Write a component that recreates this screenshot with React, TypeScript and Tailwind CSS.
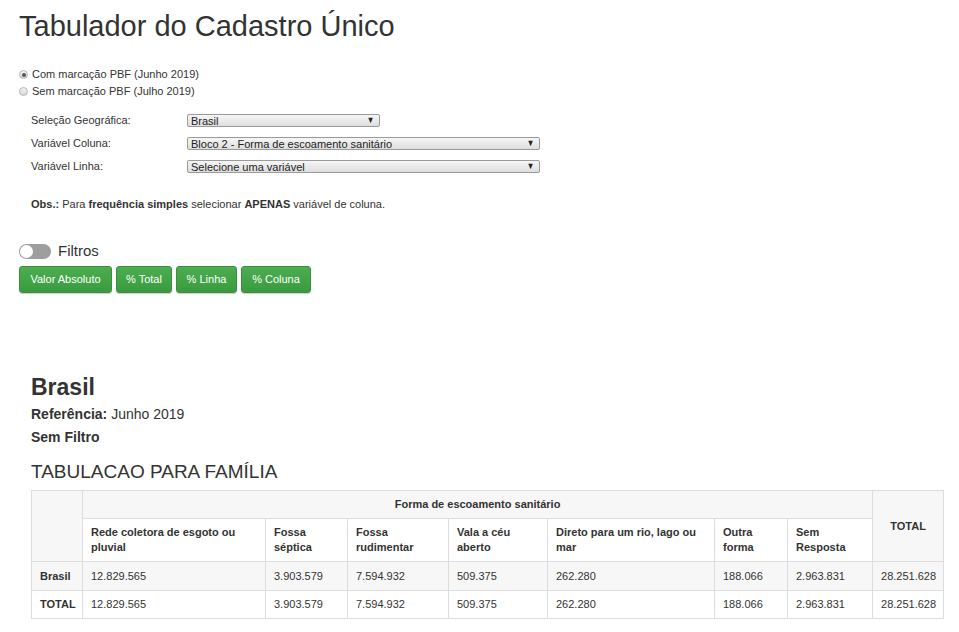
import React from "react";

const font = { fontFamily: '"Liberation Sans", Arial, Helvetica, sans-serif' };

function Select({ value, width }: { value: string; width: string }) {
  return (
    <div
      className={`${width} h-[13px] flex items-center justify-between border border-[#9a9a9a] rounded-[2px] bg-gradient-to-b from-[#f6f6f6] to-[#dedede] pl-[3px] pr-[4px] text-[11px] leading-none text-[#222]`}
    >
      <span className="mt-[1px]">{value}</span>
      <span className="text-[9px] leading-none text-[#222] scale-x-[0.85]">▼</span>
    </div>
  );
}

function Radio({ checked, label }: { checked: boolean; label: string }) {
  return (
    <div className="flex items-center h-[17px] text-[11px] text-[#333]">
      <span className="w-[9px] h-[9px] rounded-full border border-[#b5b5b5] bg-gradient-to-b from-[#f2f2f2] to-[#d8d8d8] flex items-center justify-center mr-[4px]">
        {checked && <span className="w-[4px] h-[4px] rounded-full bg-[#555]" />}
      </span>
      <span>{label}</span>
    </div>
  );
}

function Btn({ children, w }: { children: React.ReactNode; w: string }) {
  return (
    <div
      className={`${w} h-[27px] flex items-center justify-center rounded-[3px] border border-[#3b8f3e] bg-gradient-to-b from-[#4cae50] to-[#3b9a3f] text-white text-[11px] shadow-[0_1px_1px_rgba(0,0,0,0.2)]`}
    >
      {children}
    </div>
  );
}

const cols = ["Rede coletora de esgoto ou pluvial", "Fossa séptica", "Fossa rudimentar", "Vala a céu aberto", "Direto para um rio, lago ou mar", "Outra forma", "Sem Resposta"];
const colWidths = [51, 183, 82, 101, 99, 167, 73, 85, 71];
const vals = ["12.829.565", "3.903.579", "7.594.932", "509.375", "262.280", "188.066", "2.963.831"];

export default function App() {
  return (
    <div className="w-[959px] min-h-[632px] bg-white text-[#333]" style={font}>
      <div className="pl-[19px] pt-[8px]">
        <h1 className="text-[29px] leading-[36px] font-normal text-[#333]">Tabulador do Cadastro Único</h1>
        <div className="mt-[22px] flex flex-col">
          <Radio checked label="Com marcação PBF (Junho 2019)" />
          <Radio checked={false} label="Sem marcação PBF (Julho 2019)" />
        </div>
        <div className="pl-[12px] mt-[13px] flex flex-col gap-[10px] text-[11px]">
          <div className="flex items-center h-[13px] mt-[1px]">
            <span className="w-[156px]">Seleção Geográfica:</span>
            <Select value="Brasil" width="w-[193px]" />
          </div>
          <div className="flex items-center h-[13px]">
            <span className="w-[156px]">Variável Coluna:</span>
            <Select value="Bloco 2 - Forma de escoamento sanitário" width="w-[353px]" />
          </div>
          <div className="flex items-center h-[13px]">
            <span className="w-[156px]">Variável Linha:</span>
            <Select value="Selecione uma variável" width="w-[353px]" />
          </div>
          <div className="mt-[15px] h-[13px] flex items-center">
            <span>
              <b>Obs.:</b> Para <b>frequência simples</b> selecionar <b>APENAS</b> variável de coluna.
            </span>
          </div>
        </div>
        <div className="mt-[32px] flex items-center h-[17px]">
          <div className="w-[32px] h-[15px] rounded-full bg-[#9e9e9e] relative">
            <div className="absolute left-[1px] top-[1px] w-[13px] h-[13px] rounded-full bg-white" />
          </div>
          <span className="ml-[7px] text-[15px]">Filtros</span>
        </div>
        <div className="mt-[6px] flex gap-[4px]">
          <Btn w="w-[93px]">Valor Absoluto</Btn>
          <Btn w="w-[56px]">% Total</Btn>
          <Btn w="w-[61px]">% Linha</Btn>
          <Btn w="w-[70px]">% Coluna</Btn>
        </div>
      </div>

      <div className="pl-[31px] pr-[16px] mt-[79px]">
        <div className="text-[23px] font-bold leading-[30px] text-[#333]">Brasil</div>
        <div className="text-[14px] leading-[20px] mt-[2px]">
          <b>Referência:</b> Junho 2019
        </div>
        <div className="text-[14px] leading-[20px] mt-[3px] font-bold">Sem Filtro</div>
        <div className="text-[19px] leading-[24px] mt-[13px]">TABULACAO PARA FAMÍLIA</div>
        <table className="mt-[6px] border-collapse table-fixed text-[11px] leading-[15px] w-[912px]">
          <colgroup>
            {colWidths.map((w, i) => (
              <col key={i} style={{ width: w }} />
            ))}
          </colgroup>
          <thead>
            <tr className="bg-[#f7f7f7] h-[28px]">
              <th rowSpan={2} className="border border-[#dddddd]" />
              <th colSpan={7} className="border border-[#dddddd] font-bold text-center align-middle">
                Forma de escoamento sanitário
              </th>
              <th rowSpan={2} className="border border-[#dddddd] font-bold text-center align-middle">
                TOTAL
              </th>
            </tr>
            <tr className="bg-white h-[43px]">
              {cols.map((c) => (
                <th key={c} className="border border-[#dddddd] font-bold text-left px-[8px] align-middle">
                  {c}
                </th>
              ))}
            </tr>
          </thead>
          <tbody>
            {["Brasil", "TOTAL"].map((r, ri) => (
              <tr key={r} className={`${ri === 0 ? "bg-[#f7f7f7] h-[29px]" : "bg-white h-[28px]"}`}>
                <td className="border border-[#dddddd] font-bold px-[8px]">{r}</td>
                {vals.map((v, i) => (
                  <td key={i} className="border border-[#dddddd] px-[8px]">
                    {v}
                  </td>
                ))}
                <td className="border border-[#dddddd] px-[7px] text-right">28.251.628</td>
              </tr>
            ))}
          </tbody>
        </table>
      </div>
    </div>
  );
}
